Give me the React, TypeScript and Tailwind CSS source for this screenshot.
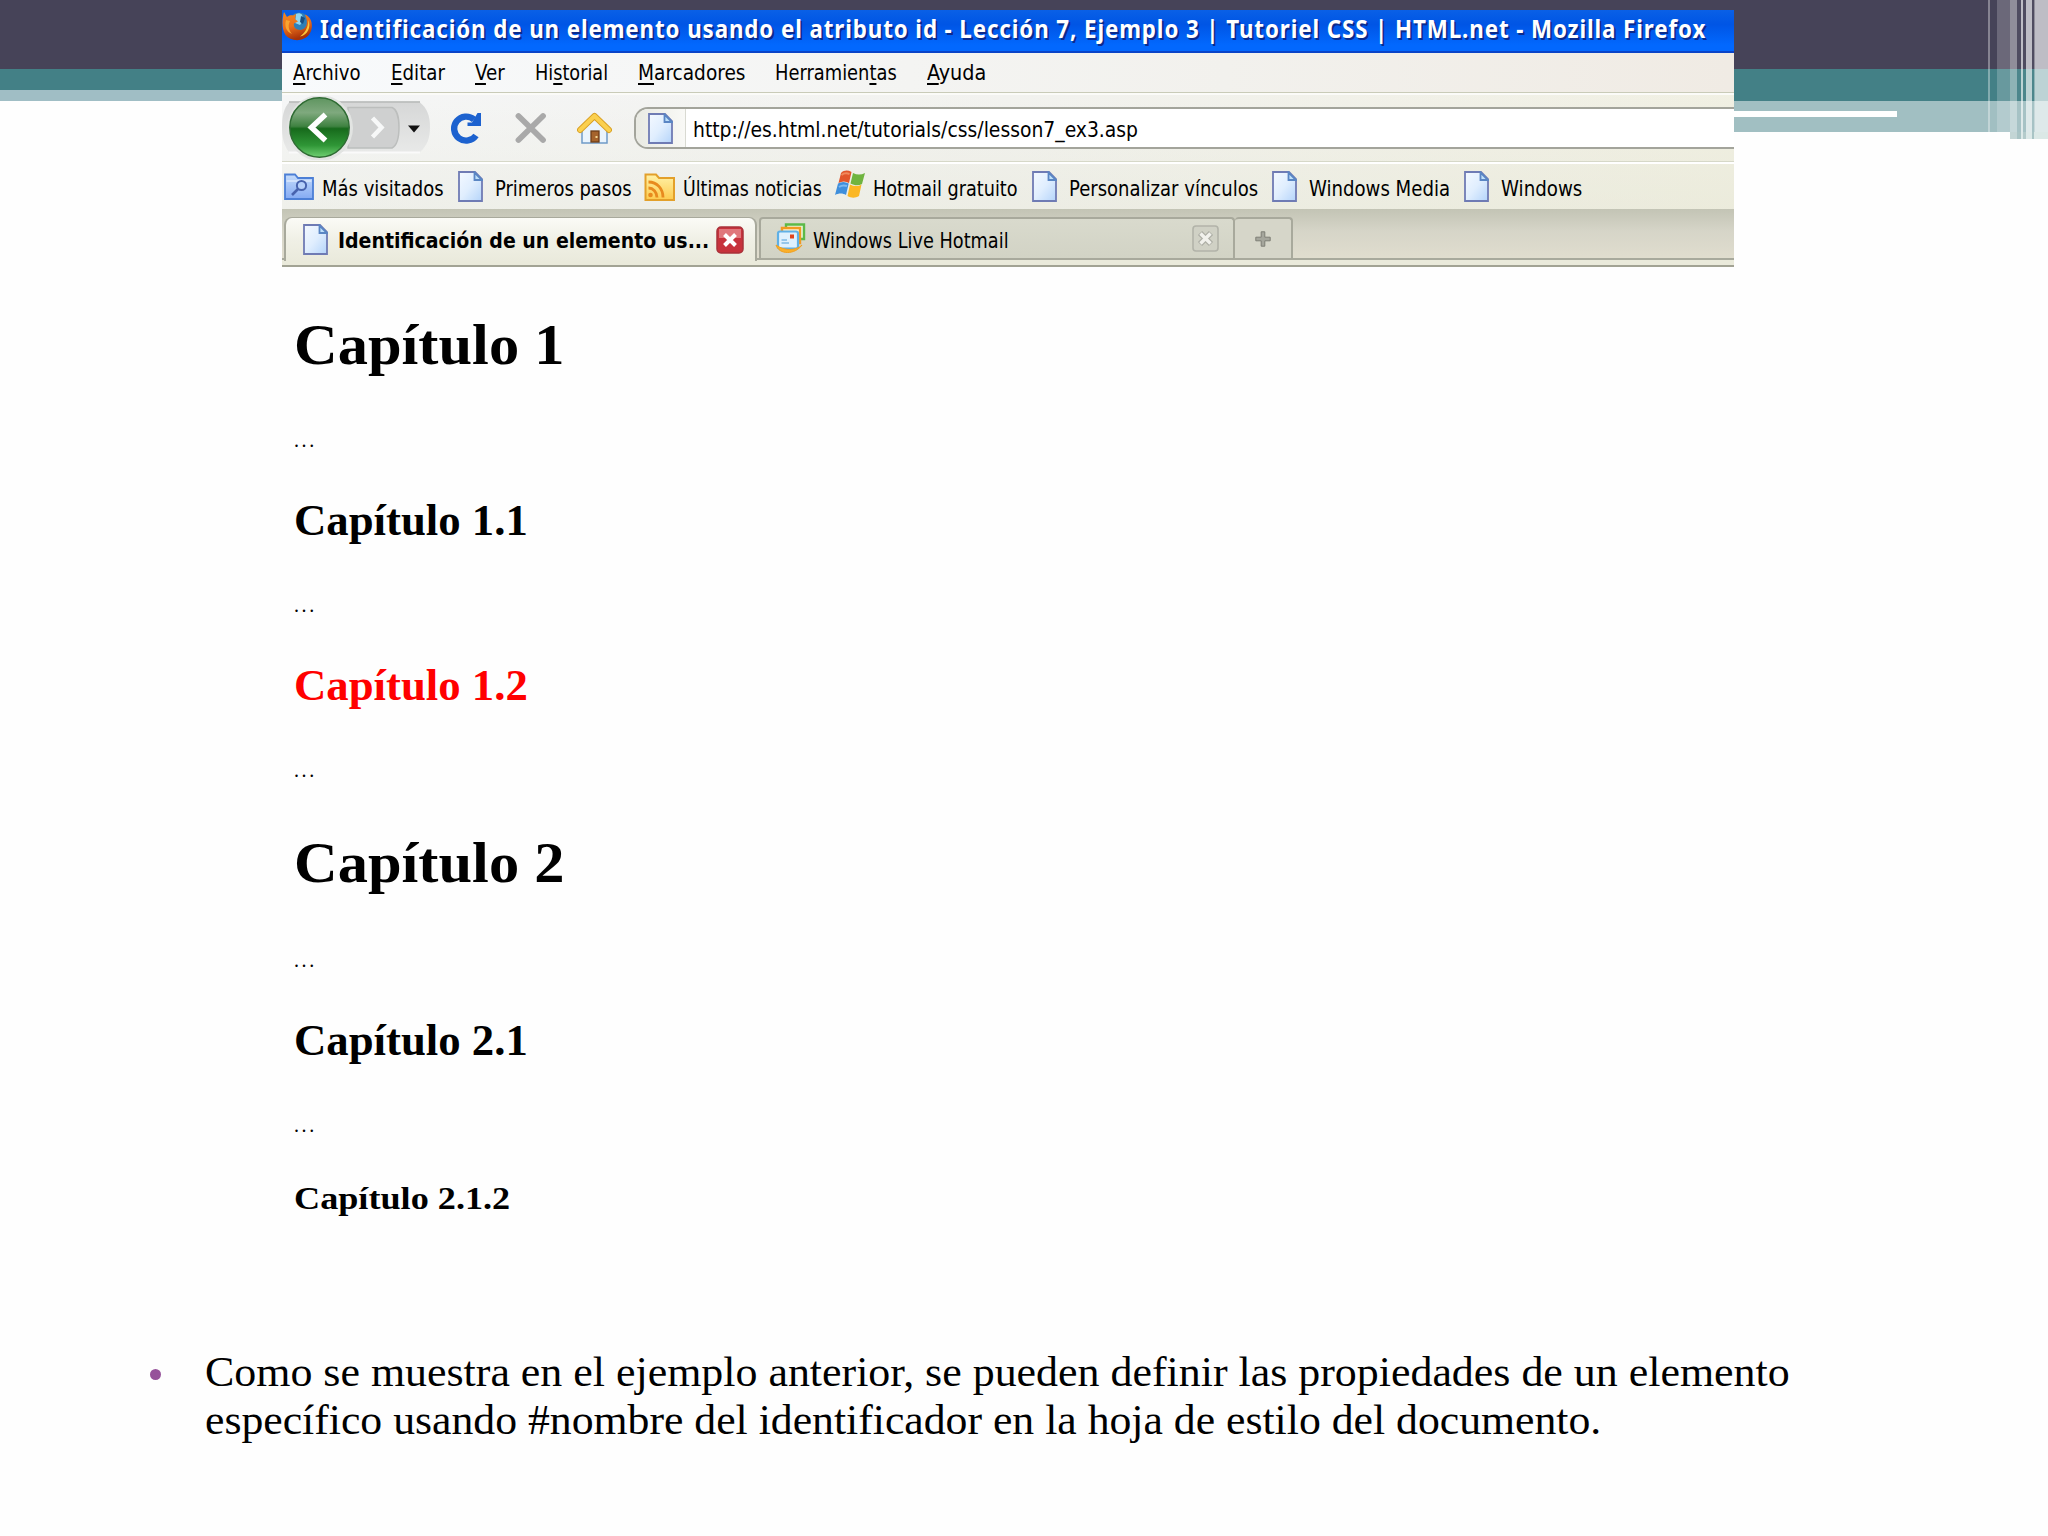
import React, { useLayoutEffect, useRef, useState } from "react";

type FitProps = {
  width: number;
  className?: string;
  children: React.ReactNode;
};

// Squeezes or stretches a single line of text to the given width
const Fit: React.FC<FitProps> = ({ width, className = "", children }) => {
  const ref = useRef<HTMLSpanElement>(null);
  const [scale, setScale] = useState(1);

  useLayoutEffect(() => {
    if (ref.current) setScale(width / ref.current.offsetWidth);
  }, [width]);

  return (
    <span className={`block shrink-0 whitespace-pre ${className}`} style={{ width }}>
      <span
        ref={ref}
        className="inline-block origin-left"
        style={{ transform: `scaleX(${scale})` }}
      >
        {children}
      </span>
    </span>
  );
};

const PageIcon = () => (
  <svg width="25" height="31" viewBox="0 0 25 31" className="shrink-0">
    <defs>
      <linearGradient id="page" x1="0" y1="0" x2="1" y2="1">
        <stop offset="0" stopColor="#f4f9ff" />
        <stop offset="0.5" stopColor="#e0eefe" />
        <stop offset="1" stopColor="#b4d4fa" />
      </linearGradient>
    </defs>
    <path d="M1 1H17L24 8V30H1Z" fill="url(#page)" stroke="#6f7bb4" strokeWidth="1.8" />
    <path d="M16.5 1.5V9H24Z" fill="#bfe0fa" stroke="#5a86c4" strokeWidth="1.8" />
  </svg>
);

const FolderSearchIcon = () => (
  <svg width="30" height="27" viewBox="0 0 30 27">
    <defs>
      <linearGradient id="fold" x1="0" y1="0" x2="0" y2="1">
        <stop offset="0" stopColor="#c5dcfb" />
        <stop offset="1" stopColor="#84aaf3" />
      </linearGradient>
    </defs>
    <path d="M1 1.5H11L14 5H29V26H1Z" fill="url(#fold)" stroke="#4c7fd6" strokeWidth="1.8" />
    <path d="M2.5 8H27.5" stroke="#dbe9fd" strokeWidth="1.5" />
    <circle cx="17.5" cy="12.5" r="4.6" fill="#b6d0fa" stroke="#4863ae" strokeWidth="2" />
    <path d="M14 16L8 22" stroke="#4863ae" strokeWidth="2.6" />
  </svg>
);

const FeedIcon = () => (
  <svg width="31" height="28" viewBox="0 0 31 28">
    <defs>
      <linearGradient id="feed" x1="0" y1="0" x2="0" y2="1">
        <stop offset="0" stopColor="#fff2a8" />
        <stop offset="1" stopColor="#fdcb4e" />
      </linearGradient>
    </defs>
    <path d="M1.5 1.5H12L15 5H30V27H1.5Z" fill="url(#feed)" stroke="#e3a02a" strokeWidth="2" />
    <circle cx="6.5" cy="22" r="2.3" fill="#e88a1e" />
    <path d="M4.5 15C9 15 13 19 13 24.5M4.5 9C13 9 19 15.5 19 24.5" fill="none" stroke="#e88a1e" strokeWidth="2.8" />
  </svg>
);

const WindowsIcon = () => (
  <svg width="32" height="30" viewBox="0 0 32 30">
    <path d="M7 3C10 0 14 0 17.5 2L15 13C11.5 11 8 11 4.5 13Z" fill="#e2562a" />
    <path d="M19 3C23 5 27 5 31 3L28 14C24.5 16 20.5 15.5 16.5 13.5Z" fill="#6fb43f" />
    <path d="M4 13.5C7.5 11.5 11 11.5 14.7 13.5L12 25C9 23 4.5 23 1 25Z" fill="#3f8fdc" />
    <path d="M16 14.5C20 16.5 24 16.5 27.5 14.5L25 26C21 28.5 17 28 13.5 26Z" fill="#fbb724" />
    <path d="M7.5 5C10 3 13 3 15.5 4" stroke="#f08a5c" strokeWidth="2" fill="none" />
    <path d="M5 17C8 15 10 15 13 16" stroke="#7db9ef" strokeWidth="2" fill="none" />
  </svg>
);

const HotmailIcon = () => (
  <svg width="31" height="31" viewBox="0 0 31 31" className="shrink-0">
    <path d="M11 1.5H29V16H11Z" fill="#e9f7dc" stroke="#5cb947" strokeWidth="2.4" />
    <path d="M7 5H25V20H7Z" fill="#fff1cf" stroke="#f29a20" strokeWidth="2.4" />
    <rect x="3" y="8.5" width="20" height="17" rx="2" fill="#dff1fd" stroke="#5fb0e6" strokeWidth="2.2" />
    <rect x="15" y="11.5" width="4" height="4" fill="#e0451d" />
    <path d="M6.5 17H12M6.5 20H14" stroke="#7fb9e4" strokeWidth="1.6" />
    <path d="M1 22C4 32 20 32 27 22C21 28 9 28 1 22Z" fill="#fbb02a" stroke="#f0a020" strokeWidth="1" />
  </svg>
);

const FirefoxIcon = () => (
  <svg width="31" height="31" viewBox="0 0 31 31" className="shrink-0">
    <defs>
      <linearGradient id="fox" x1="0" y1="0" x2="0.3" y2="1">
        <stop offset="0" stopColor="#f08a22" />
        <stop offset="0.55" stopColor="#ea6f1c" />
        <stop offset="1" stopColor="#a83208" />
      </linearGradient>
    </defs>
    <circle cx="17" cy="12" r="10.5" fill="#2f7fb8" />
    <path d="M14 3C18 1 22 4 20 7C18 9 21 11 18 14L13 12Z" fill="#8fd6f2" />
    <path d="M19 5L23 7L21 13L18 11Z" fill="#174f86" />
    <path
      d="M2 1L5 6C7 4 9 4 11 4.5L14 3L13 8L16 10.5L12 12.5C11 16 14 19 18 19C23 19 26 14 24.5 8L23 3.5C30 6 32 16 27.5 23C22 31 9 31 3.5 24C-0.5 18 0 8 2 1Z"
      fill="url(#fox)"
    />
    <path d="M26.5 9C29 16 26 24 18 25.5C23 22 26 17 26.5 9Z" fill="#fbc63a" />
    <path d="M4 9C2 16 5 21 10 23C6 18 6 14 8 10Z" fill="#f9a531" />
  </svg>
);

const BackForward = () => (
  <svg width="149" height="64" viewBox="0 0 149 64" className="shrink-0">
    <defs>
      <linearGradient id="green" x1="0" y1="0" x2="0" y2="1">
        <stop offset="0" stopColor="#5f9560" />
        <stop offset="0.25" stopColor="#7fa97e" />
        <stop offset="0.48" stopColor="#3f8241" />
        <stop offset="0.52" stopColor="#176a1c" />
        <stop offset="0.8" stopColor="#2f9636" />
        <stop offset="1" stopColor="#6fd072" />
      </linearGradient>
      <linearGradient id="caps" x1="0" y1="0" x2="0" y2="1">
        <stop offset="0" stopColor="#d6d7d7" />
        <stop offset="1" stopColor="#e8e9e8" />
      </linearGradient>
    </defs>
    <path d="M7 6.5H138C145 12 148 20 148 31C148 42 145 50 138 56H7C2 50 0 42 0 31C0 20 2 12 7 6.5Z" fill="url(#caps)" />
    <path d="M7 6H138" stroke="#b2b4b3" strokeWidth="1.5" />
    <path d="M7 56.5H138" stroke="#fafafa" strokeWidth="1.8" />
    <path d="M66 11.5H110C114 13 117 20 117 31C117 43 114 50 110 52H66Z" fill="#cfd0d0" stroke="#bcbebd" strokeWidth="1.5" />
    <circle cx="38" cy="32" r="33" fill="#e2e4e2" />
    <circle cx="37.5" cy="31.5" r="29.7" fill="url(#green)" stroke="#2f6b33" strokeWidth="1.5" />
    <path d="M43.5 18.5L29.5 31.5L43.5 44.5" fill="none" stroke="#fff" strokeWidth="5.5" />
    <path d="M90.5 22L99.5 31.5L90.5 41" fill="none" stroke="#f7f8f8" strokeWidth="4.5" />
    <path d="M126 29.5H138L132 36.5Z" fill="#111" />
  </svg>
);

const ReloadIcon = () => (
  <svg width="32" height="32" viewBox="0 0 32 32" className="shrink-0">
    <path d="M26 23.5A12 12 0 1 1 24 7.5" fill="none" stroke="#1d62cf" strokeWidth="6.4" />
    <path d="M31 1V14H17.5V10.5H22L27.5 1Z" fill="#1d62cf" />
  </svg>
);

const StopIcon = () => (
  <svg width="33" height="32" viewBox="0 0 33 32" className="shrink-0">
    <path d="M4.500 4L29 28M29 4L4.500 28" stroke="#a9a9a9" strokeWidth="5.8" strokeLinecap="round" />
  </svg>
);

const HomeIcon = () => (
  <svg width="35" height="32" viewBox="0 0 35 32" className="shrink-0">
    <path d="M5 17L17.5 6L30 17V31H5Z" fill="#eaf4fd" stroke="#6f9bc8" strokeWidth="1.5" />
    <rect x="14" y="19" width="8" height="11" fill="#a5632b" stroke="#6d3d16" strokeWidth="1.3" />
    <rect x="18.5" y="24" width="2" height="2" fill="#f3d58f" />
    <path d="M3 18L17.5 4L32 18" fill="none" stroke="#d9a024" strokeWidth="6" strokeLinecap="round" strokeLinejoin="round" />
    <path d="M3 18L17.5 4L32 18" fill="none" stroke="#fbd04e" strokeWidth="4.2" strokeLinecap="round" strokeLinejoin="round" />
  </svg>
);

const ui = "font-['DejaVu_Sans_Condensed','DejaVu_Sans',sans-serif] text-[21px] leading-[26px]";

const menu = [
  { pre: "", key: "A", post: "rchivo", width: 68 },
  { pre: "", key: "E", post: "ditar", width: 54 },
  { pre: "", key: "V", post: "er", width: 30 },
  { pre: "Hi", key: "s", post: "torial", width: 73 },
  { pre: "", key: "M", post: "arcadores", width: 107 },
  { pre: "Herramien", key: "t", post: "as", width: 122 },
  { pre: "", key: "A", post: "yuda", width: 59 },
];

const bookmarks = [
  { label: "Más visitados", icon: <FolderSearchIcon />, box: "w-[30px] mr-[8px]", width: 122 },
  { label: "Primeros pasos", icon: <PageIcon />, box: "w-[27px] mr-3", width: 137 },
  { label: "Últimas noticias", icon: <FeedIcon />, box: "w-[31px] mr-[8px]", width: 139 },
  { label: "Hotmail gratuito", icon: <WindowsIcon />, box: "w-[32px] mr-[7px] pb-1", width: 145 },
  { label: "Personalizar vínculos", icon: <PageIcon />, box: "w-[27px] mr-3", width: 189 },
  { label: "Windows Media", icon: <PageIcon />, box: "w-[27px] mr-3", width: 141 },
  { label: "Windows", icon: <PageIcon />, box: "w-[27px] mr-3", width: 81 },
];

const Dots = ({ className }: { className: string }) => (
  <p className={`pb-[2px] text-[20px] leading-[22px] font-normal tracking-[2.6px] ${className}`}>...</p>
);

const SlideHeader = () => (
  <div className="[grid-area:1/1]">
    <div className="h-[69px] bg-[#464358]" />
    <div className="flex">
      <div className="w-[400px]">
        <div className="h-[21px] bg-[#438086]" />
        <div className="h-[11px] bg-[#a0bec5]" />
      </div>
      <div className="flex-1">
        <div className="h-8 bg-[#438086]" />
        <div className="h-[31px] bg-[#a1bfc2] pt-[10px]">
          <div className="h-[6px] w-[1497px] bg-white" />
        </div>
      </div>
    </div>
  </div>
);

const Stripes = () => (
  <div className="[grid-area:1/1] flex items-start justify-end">
    <div className="flex h-[132px]">
      <div className="w-[2px] bg-white/35" />
      <div className="w-[7px]" />
      <div className="w-[13px] bg-white/20" />
    </div>
    <div>
      <div className="flex h-[132px]">
        <div className="w-[7px] bg-white/40" />
        <div className="w-[4px] bg-white/5" />
        <div className="w-[2px] bg-white/65" />
        <div className="w-[3px] bg-white/5" />
        <div className="w-[6px] bg-white/65" />
        <div className="w-[2px] bg-white/5" />
        <div className="w-[1px] bg-white/40" />
        <div className="w-[13px] bg-white/65" />
      </div>
      <div className="flex h-[7px]">
        <div className="w-[7px] bg-[#c3d5d5]" />
        <div className="w-[4px] bg-[#a9c4c5]" />
        <div className="w-[2px] bg-[#dde9e8]" />
        <div className="w-[3px] bg-[#b4cbcb]" />
        <div className="w-[6px] bg-[#dde9e8]" />
        <div className="w-[2px] bg-[#a9c4c5]" />
        <div className="w-[14px] bg-[#dbe8e6]" />
      </div>
    </div>
  </div>
);

const Toolbars = () => (
  <div className={`text-black ${ui}`}>
    <div className="flex h-[43px] items-center border-b-2 border-[#0a44c8] bg-linear-to-b from-[#0a60e6] via-[#0055e5] via-35% to-[#0268fe] to-85%">
      <div className="mb-2 w-[38px]">
        <FirefoxIcon />
      </div>
      <Fit
        width={1386}
        className="mb-[6px] font-['Noto_Sans',sans-serif] text-[25px] leading-[36px] font-bold tracking-[1px] text-white [text-shadow:2px_2px_0_#0b2a8c]"
      >
        Identificación de un elemento usando el atributo id - Lección 7, Ejemplo 3 | Tutoriel CSS | HTML.net - Mozilla Firefox
      </Fit>
    </div>

    <div className="flex h-[40px] items-center gap-[30px] border-b border-[#c9cbb8] bg-linear-to-r from-[#f8fafc] via-[#f2f1ed] via-65% to-[#f0ebe4] pt-px pl-[11px]">
      {menu.map((item) => (
        <Fit key={item.post} width={item.width}>
          {item.pre}
          <span className="underline decoration-2 underline-offset-[3px]">{item.key}</span>
          {item.post}
        </Fit>
      ))}
    </div>

    <div className="bg-linear-to-r from-[#f3f4f5] via-[#efefeb] via-50% to-[#edecdc]">
      <div className="bg-linear-to-b from-white/20 to-[#e9eadb]/40">
        <div className="flex h-[69px] items-center border-t-2 border-b border-t-[#fbfbf8] border-b-[#d6d8c8]">
          <BackForward />
          <div className="ml-[19px]">
            <ReloadIcon />
          </div>
          <div className="ml-8">
            <StopIcon />
          </div>
          <div className="ml-[30px]">
            <HomeIcon />
          </div>
          <div className="ml-[22px] flex h-[42px] flex-1 items-center overflow-hidden rounded-l-[14px] border-y-2 border-l-2 border-[#a3a49b] bg-white">
            <div className="flex h-full w-[50px] items-center justify-center border-r border-[#d9dad2] bg-linear-to-r from-[#e9eae3] to-[#f9f9f6]">
              <PageIcon />
            </div>
            <Fit width={445} className="mt-1 ml-[7px]">
              http://es.html.net/tutorials/css/lesson7_ex3.asp
            </Fit>
          </div>
        </div>
        <div className="flex h-[47px] items-center gap-3 border-t-2 border-white pl-[2px]">
          {bookmarks.map((item) => (
            <div key={item.label} className="flex items-center">
              <div className={`flex justify-end ${item.box}`}>{item.icon}</div>
              <Fit width={item.width} className="mt-[5px]">
                {item.label}
              </Fit>
            </div>
          ))}
        </div>
      </div>
    </div>

    <div className="h-[58px] border-b-2 border-[#a2a394] bg-linear-to-b from-[#c3c4b5] via-[#d6d5c8] via-40% to-[#e3dfd0] pt-2">
      <div className="flex h-[43px] border-b-2 border-[#a8a99c]">
        <div className="relative z-10 -mb-[3px] ml-[2px] flex w-[473px] items-center rounded-t-lg border-x-2 border-t border-[#a8a99c] bg-linear-to-b from-[#fbfbf6] via-[#f0f0e6] to-[#eaeadc] pl-[17px]">
          <PageIcon />
          <Fit width={371} className="mt-[2px] ml-[10px] font-bold">
            Identificación de un elemento us...
          </Fit>
          <svg width="28" height="28" viewBox="0 0 28 28" className="ml-[7px]">
            <rect x="1" y="1" width="26" height="26" rx="4" fill="#c7323c" stroke="#a9323a" strokeWidth="1.5" />
            <path d="M3 3H25V12H3Z" fill="#e0777c" />
            <path d="M8.5 8.5L19.5 19.5M19.5 8.5L8.5 19.5" stroke="#fff" strokeWidth="4" />
          </svg>
        </div>
        <div className="ml-[2px] flex w-[476px] items-center rounded-t-sm border-x-2 border-t-2 border-[#a8a99c] bg-linear-to-b from-[#d9dacd] to-[#d2d3c5] pl-[14px]">
          <HotmailIcon />
          <Fit width={196} className="mt-[4px] ml-[7px]">
            Windows Live Hotmail
          </Fit>
          <svg width="27" height="27" viewBox="0 0 27 27" className="mr-[14px] ml-auto">
            <rect x="1" y="1" width="25" height="25" rx="3" fill="#d0d1c5" stroke="#b2b3a9" strokeWidth="1.6" />
            <path d="M8 8L19 19M19 8L8 19" stroke="#adaea5" strokeWidth="6" />
            <path d="M8.5 8.5L18.5 18.5M18.5 8.5L8.5 18.5" stroke="#f1f1ec" strokeWidth="3.4" />
          </svg>
        </div>
        <div className="flex w-[58px] items-center justify-center rounded-t-sm border-t-2 border-r-2 border-[#a8a99c] bg-[#d6d6c9]">
          <svg width="16" height="16" viewBox="0 0 16 16">
            <path d="M6.2 0.8H9.8V6.2H15.2V9.8H9.8V15.2H6.2V9.8H0.8V6.2H6.2Z" fill="#a5a69c" stroke="#7e7f76" strokeWidth="1" />
          </svg>
        </div>
      </div>
      <div className="h-[5px] bg-[#eaeadb]" />
    </div>
  </div>
);

const App: React.FC = () => {
  return (
    <div className="h-[1536px] w-[2048px] overflow-hidden bg-[#fefefe] font-['Liberation_Serif',serif] text-black">
      <div className="grid">
        <SlideHeader />
        <Stripes />
        <div className="relative [grid-area:1/1] mt-[10px] ml-[282px] w-[1452px] bg-[#fefefe]">
          <Toolbars />
          <div className="pl-[12px] font-bold">
            <h1 className="mt-[48px] text-[58px] leading-[60px]">
              <Fit width={270}>Capítulo 1</Fit>
            </h1>
            <Dots className="mt-[54px]" />
            <h2 className="mt-[46px] text-[44px] leading-[44px]">
              <Fit width={234}>Capítulo 1.1</Fit>
            </h2>
            <Dots className="mt-[51px]" />
            <h2 className="mt-[46px] text-[44px] leading-[44px] text-[#ff0000]">
              <Fit width={234}>Capítulo 1.2</Fit>
            </h2>
            <Dots className="mt-[51px]" />
            <h1 className="mt-[50px] text-[58px] leading-[60px]">
              <Fit width={270}>Capítulo 2</Fit>
            </h1>
            <Dots className="mt-[56px]" />
            <h2 className="mt-[46px] text-[44px] leading-[44px]">
              <Fit width={234}>Capítulo 2.1</Fit>
            </h2>
            <Dots className="mt-[51px]" />
            <h3 className="mt-[44px] text-[32px] leading-[32px]">
              <Fit width={216}>Capítulo 2.1.2</Fit>
            </h3>
          </div>
        </div>
      </div>

      <div className="mt-[134px] flex pl-[150px]">
        <div className="mt-[21px] mr-11 size-[11px] rounded-full bg-[#96529a]" />
        <div className="font-['Liberation_Serif',serif] text-[42px] leading-[48px]">
          <Fit width={1585}>Como se muestra en el ejemplo anterior, se pueden definir las propiedades de un elemento</Fit>
          <Fit width={1396}>específico usando #nombre del identificador en la hoja de estilo del documento.</Fit>
        </div>
      </div>
    </div>
  );
};

export default App;
